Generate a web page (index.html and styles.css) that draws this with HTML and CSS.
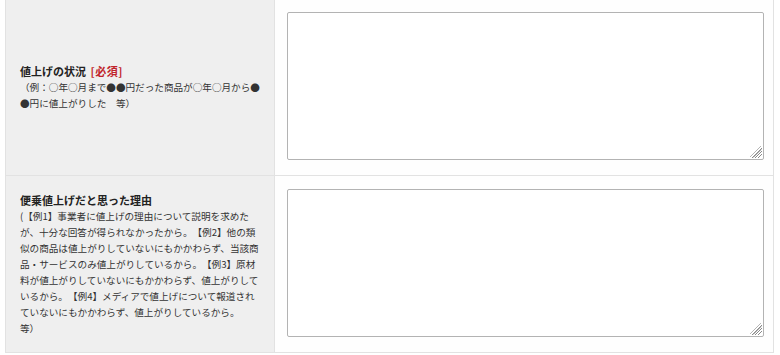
FILE: index.html
```html
<!DOCTYPE html>
<html lang="ja">
<head>
<meta charset="utf-8">
<title>フォーム</title>
<link rel="stylesheet" href="styles.css">
</head>
<body>
<div class="form">
  <div class="row">
    <div class="label">
      <p class="title">値上げの状況 <span class="req">[必須]</span></p>
      <p class="desc">（例：<span class="fw">○</span>年<span class="fw">○</span>月まで<span class="fw">●</span><span class="fw">●</span>円だった商品が<span class="fw">○</span>年<span class="fw">○</span>月から<span class="fw">●</span><span class="fw">●</span>円に値上がりした　等）</p>
    </div>
    <div class="field">
      <div class="ta-wrap">
        <textarea class="ta"></textarea>
        <svg class="grip" width="12" height="12" viewBox="0 0 12 12"><g stroke="#8a8a8a" stroke-width="1"><line x1="2" y1="12" x2="12" y2="2"/><line x1="5" y1="12" x2="12" y2="5"/><line x1="8" y1="12" x2="12" y2="8"/><line x1="0" y1="11" x2="11" y2="0" stroke="#b5b5b5"/><line x1="3.5" y1="11.5" x2="11.5" y2="3.5" stroke="#b5b5b5"/></g></svg>
      </div>
    </div>
  </div>
  <div class="row">
    <div class="label">
      <p class="title">便乗値上げだと思った理由</p>
      <p class="desc">(【例1】事業者に値上げの理由について説明を求めたが、十分な回答が得られなかったから。【例2】他の類似の商品は値上がりしていないにもかかわらず、当該商品・サービスのみ値上がりしているから。【例3】原材料が値上がりしていないにもかかわらず、値上がりしているから。【例4】メディアで値上げについて報道されていないにもかかわらず、値上がりしているから。<br>等）</p>
    </div>
    <div class="field">
      <div class="ta-wrap">
        <textarea class="ta"></textarea>
        <svg class="grip" width="12" height="12" viewBox="0 0 12 12"><g stroke="#8a8a8a" stroke-width="1"><line x1="2" y1="12" x2="12" y2="2"/><line x1="5" y1="12" x2="12" y2="5"/><line x1="8" y1="12" x2="12" y2="8"/><line x1="0" y1="11" x2="11" y2="0" stroke="#b5b5b5"/><line x1="3.5" y1="11.5" x2="11.5" y2="3.5" stroke="#b5b5b5"/></g></svg>
      </div>
    </div>
  </div>
</div>
</body>
</html>
```
FILE: styles.css
```css
html, body {
  margin: 0;
  padding: 0;
  background: #ffffff;
}
body {
  font-family: "Noto Sans CJK JP", sans-serif;
  color: #333;
  text-spacing-trim: space-all;
}
.form {
  margin: -2px 6px 0 5px;
  border: 1px solid #e2e2e2;
}
.row {
  display: grid;
  grid-template-columns: 269px 1fr;
  border-bottom: 1px solid #e2e2e2;
}
.row:last-child {
  border-bottom: none;
}
.label {
  background: #efefef;
  border-right: 1px solid #e2e2e2;
  padding: 0 13px 0 14px;
  display: flex;
  flex-direction: column;
  justify-content: center;
}
.title {
  margin: 0;
  font-size: 11px;
  line-height: 16px;
  font-weight: 700;
  color: #222;
}
.req {
  color: #c0242b;
  margin-left: 2px;
  letter-spacing: 0.5px;
}
.desc {
  margin: 0;
  font-size: 9.6px;
  line-height: 16px;
  color: #333;
  text-spacing-trim: space-all;
}
.fw {
  display: inline-block;
  width: 1em;
  text-align: center;
}
.field {
  background: #fefefe;
  padding: 13px 9px 15px 12px;
}
.ta-wrap {
  position: relative;
  height: 148px;
}
.ta {
  display: block;
  box-sizing: border-box;
  width: 100%;
  height: 148px;
  margin: 0;
  border: 1px solid #b3b3b3;
  border-radius: 2px;
  background: #fff;
  resize: none;
  outline: none;
}
.grip {
  position: absolute;
  right: 2px;
  bottom: 2px;
}
```
